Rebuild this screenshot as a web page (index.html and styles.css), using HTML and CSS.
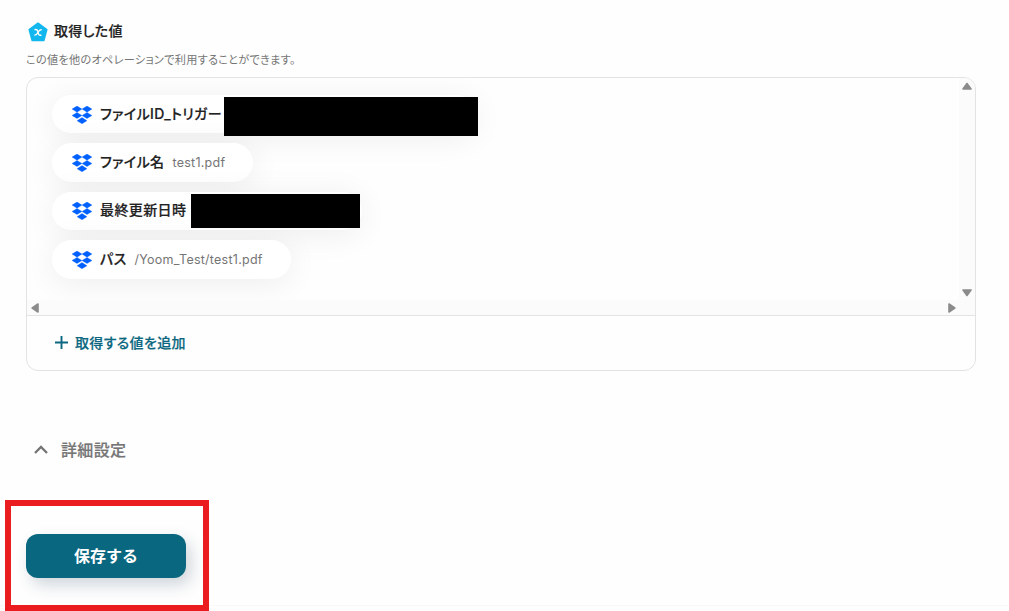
FILE: index.html
```
<!DOCTYPE html>
<html lang="ja">
<head>
    <meta charset="UTF-8">
    <meta name="viewport" content="width=device-width, initial-scale=1.0">
    <title>取得した値</title>
    <link rel="stylesheet" href="styles.css">
</head>
<body>
    <svg class="defs" width="0" height="0">
        <symbol id="dropbox" viewBox="0 0 20 18">
            <path d="M5 0l5 3.1-5 3.1-5-3.1zM15 0l5 3.1-5 3.1-5-3.1zM5 6.4l5 3.1-5 3.1-5-3.1zM15 6.4l5 3.1-5 3.1-5-3.1zM10 11.6l5 3.1-5 3.1-5-3.1z" fill="#0061ff" stroke="#0061ff" stroke-width="0.3"/>
        </symbol>
    </svg>

    <main class="page">
        <div class="heading">
            <svg class="heading-icon" width="20" height="20" viewBox="0 0 20 20">
                <path d="M10 1.2l8.8 6.4-3 10.9H4.2l-3-10.9z" fill="#12b7ee" stroke="#12b7ee" stroke-width="1.6" stroke-linejoin="round"/>
                <path d="M7 7.6c1.7-.4 2.3.2 2.8 1.7l.8 2.8c.4 1.2 1 1.5 2.4 1.1M13.2 7.7c-1.6-.1-2.1.7-3.1 2.5-1 1.9-1.7 3-3.3 2.9" fill="none" stroke="#fff" stroke-width="1.4" stroke-linecap="round"/>
            </svg>
            <h1>取得した値</h1>
        </div>
        <p class="description">この値を他のオペレーションで利用することができます。</p>

        <section class="values">
            <div class="scroll-area">
                <div class="chips">
                    <div class="chip chip-id">
                        <svg class="chip-icon"><use href="#dropbox"/></svg>
                        <span class="chip-name">ファイルID_トリガー</span>
                        <span class="mask mask-id"></span>
                    </div>
                    <div class="chip">
                        <svg class="chip-icon"><use href="#dropbox"/></svg>
                        <span class="chip-name">ファイル名</span>
                        <span class="chip-value">test1.pdf</span>
                    </div>
                    <div class="chip chip-date">
                        <svg class="chip-icon"><use href="#dropbox"/></svg>
                        <span class="chip-name">最終更新日時</span>
                        <span class="mask mask-date"></span>
                    </div>
                    <div class="chip">
                        <svg class="chip-icon"><use href="#dropbox"/></svg>
                        <span class="chip-name">パス</span>
                        <span class="chip-value">/Yoom_Test/test1.pdf</span>
                    </div>
                </div>
                <div class="scrollbar scrollbar-y">
                    <svg width="10" height="8" viewBox="0 0 10 8"><path d="M5 1.5L9 7H1z"/></svg>
                    <svg width="10" height="8" viewBox="0 0 10 8"><path d="M5 6.5L9 1H1z"/></svg>
                </div>
                <div class="scrollbar scrollbar-x">
                    <svg width="8" height="10" viewBox="0 0 8 10"><path d="M1.2 5L7 1v8z"/></svg>
                    <svg width="8" height="10" viewBox="0 0 8 10"><path d="M6.8 5L1 1v8z"/></svg>
                </div>
                <div class="scroll-corner"></div>
            </div>
            <div class="add-value">
                <svg width="13" height="13" viewBox="0 0 13 13"><path d="M6.5 0v13M0 6.5h13" stroke="#0b6780" stroke-width="1.9"/></svg>
                <span>取得する値を追加</span>
            </div>
        </section>

        <div class="details">
            <svg width="14" height="9" viewBox="0 0 14 9"><path d="M1 8l6-6 6 6" fill="none" stroke="#757575" stroke-width="2.3"/></svg>
            <span>詳細設定</span>
        </div>

        <button class="save" type="button">保存する</button>
        <div class="highlight"></div>
    </main>
    <footer class="bottom-line"></footer>
</body>
</html>
```

FILE: styles.css
```
* {
    box-sizing: border-box;
}
body {
    margin: 0;
    height: 611px;
    overflow: hidden;
    position: relative;
    display: flex;
    flex-direction: column;
    background-color: #fefefe;
    color: #222;
    font-family: Inter, "Noto Sans CJK JP", sans-serif;
    font-feature-settings: "palt";
    letter-spacing: 0.02em;
}
.defs {
    position: absolute;
}
.page {
    height: 605px;
    padding: 20px 33px 0 26px;
}
.heading {
    display: flex;
    align-items: center;
    gap: 6px;
    height: 24px;
    padding-left: 2px;
}
h1 {
    margin: 0 0 2px;
    font-size: 14px;
    line-height: 20px;
    font-weight: 500;
    letter-spacing: 0.3px;
    -webkit-text-stroke: 0.2px;
}
.description {
    margin: 7px 0 0;
    height: 26px;
    font-size: 11.2px;
    line-height: 18px;
    letter-spacing: 0.25px;
    color: #757575;
}
.values {
    height: 294px;
    border: 1px solid #e3e3e3;
    border-radius: 12px;
    overflow: hidden;
}
.scroll-area {
    display: grid;
    grid-template-columns: 1fr 16px;
    grid-template-rows: 222px 15px;
    height: 238px;
    border-bottom: 1px solid #e3e3e3;
}
.chips {
    display: flex;
    flex-direction: column;
    align-items: flex-start;
    gap: 10px;
    padding: 17px 25px 0;
    overflow: hidden;
}
.chip {
    position: relative;
    display: flex;
    align-items: center;
    height: 38.4px;
    padding: 0 28px 0 20px;
    border-radius: 20px;
    background-color: #fff;
    box-shadow: 0 4px 32px rgba(0, 0, 0, 0.07);
}
.chip-id {
    width: 424px;
}
.chip-date {
    width: 310px;
}
.chip-icon {
    width: 20px;
    height: 18px;
    margin: 1px 8px 0 0;
}
.chip-name {
    padding-bottom: 3px;
    font-size: 14px;
    font-weight: 500;
    letter-spacing: 0.4px;
    white-space: nowrap;
    -webkit-text-stroke: 0.2px;
}
.chip-value {
    margin-left: 8px;
    font-size: 12.5px;
    letter-spacing: 0.25px;
    color: #757575;
}
.mask {
    position: absolute;
    top: 2px;
    background-color: #000;
}
.mask-id {
    left: 172px;
    width: 254px;
    height: 39px;
}
.mask-date {
    left: 139px;
    width: 169px;
    height: 34px;
}
.scrollbar {
    display: flex;
    align-items: center;
    justify-content: space-between;
    background-color: #fbfbfb;
}
.scrollbar path {
    fill: #8b8b8b;
    stroke: #8b8b8b;
    stroke-width: 1.6;
    stroke-linejoin: round;
}
.scrollbar-y {
    flex-direction: column;
    padding: 4px 0 3px;
}
.scrollbar-x {
    padding: 0 3px 0 4px;
}
.scroll-corner {
    background-color: #fbfbfb;
}
.add-value {
    display: flex;
    align-items: center;
    gap: 7px;
    height: 52px;
    padding-left: 28px;
    font-size: 14px;
    font-weight: 500;
    letter-spacing: 0.35px;
    color: #0b6780;
    -webkit-text-stroke: 0.2px;
}
.details {
    display: flex;
    align-items: center;
    gap: 13px;
    height: 24px;
    margin-top: 66px;
    padding-left: 8px;
    font-size: 16px;
    font-weight: 500;
    letter-spacing: 0.35px;
    color: #757575;
    -webkit-text-stroke: 0.2px;
}
.save {
    display: block;
    width: 160px;
    height: 44px;
    margin-top: 73px;
    padding: 0 0 2px;
    border: none;
    border-radius: 12px;
    background-color: #0a6780;
    box-shadow: 5px 7px 16px rgba(20, 50, 80, 0.2);
    color: #fff;
    font-family: inherit;
    font-size: 16px;
    font-weight: 700;
}
/* marks the save button */
.highlight {
    position: absolute;
    left: 5px;
    top: 500px;
    width: 204px;
    height: 111px;
    border: 6px solid #ea1c1f;
}
.bottom-line {
    border-top: 1px solid #f8f8f8;
}
```
